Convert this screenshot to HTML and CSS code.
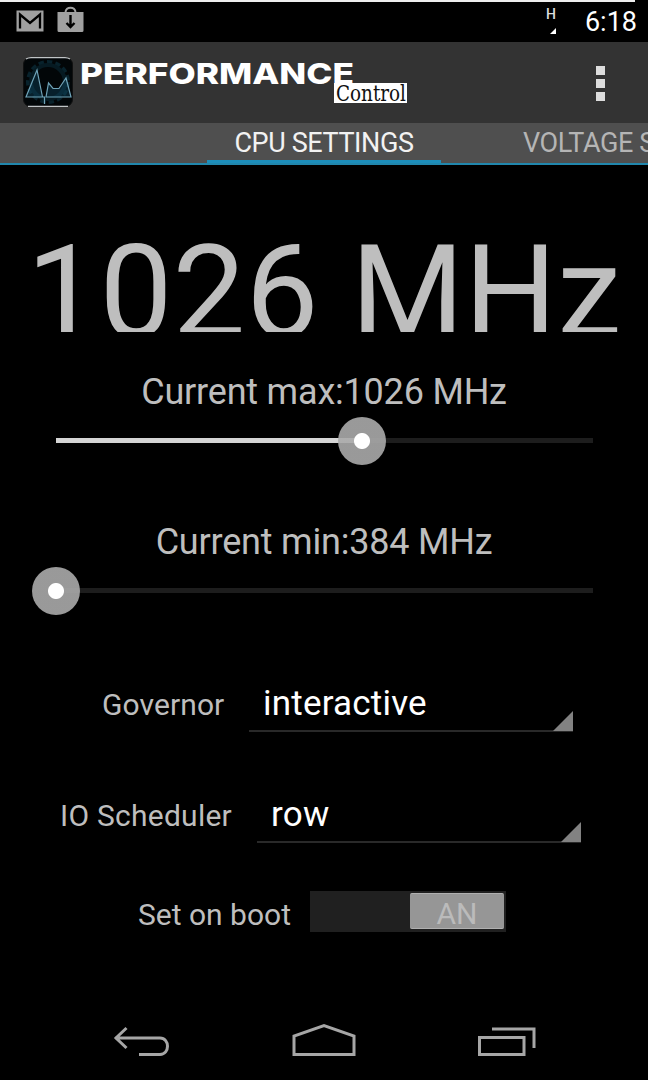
FILE: index.html
```html
<!DOCTYPE html>
<html lang="en">
<head>
    <meta charset="UTF-8">
    <meta name="viewport" content="width=device-width, initial-scale=1.0">
    <title>Performance Control</title>
    <link rel="stylesheet" href="styles.css">
</head>
<body>

<!-- Status bar -->
<div class="statusbar">
    <svg class="mail-icon" width="28" height="22" viewBox="0 0 28 22">
        <rect x="0.5" y="0.5" width="27" height="21" fill="#a0a0a0"/>
        <path d="M4 18.500V4.500l10 8.500 10-8.500v14" fill="none" stroke="#000" stroke-width="2.300"/>
    </svg>
    <svg class="store-icon" width="27" height="27" viewBox="0 0 27 27">
        <path d="M8.500 6.500C8.500 0 18.500 0 18.500 6.500" fill="none" stroke="#a0a0a0" stroke-width="2"/>
        <path d="M0.500 6h26v18.500a1.500 1.500 0 0 1-1.500 1.500h-23a1.500 1.500 0 0 1-1.500-1.500z" fill="#a0a0a0"/>
        <path d="M13.500 9v11M9.500 17l4 4 4-4" fill="none" stroke="#000" stroke-width="2.400"/>
    </svg>
    <div class="signal">
        <span>H</span>
        <svg width="6" height="6" viewBox="0 0 6 6"><path d="M6 0v6H0z" fill="#fff"/></svg>
    </div>
    <span class="clock">6:18</span>
</div>

<!-- Action bar -->
<div class="actionbar">
    <svg class="app-icon" width="50" height="50" viewBox="0 0 50 50">
        <rect x="0.500" y="0.500" width="49" height="49" rx="7" fill="#020608" stroke="#111"/>
        <circle cx="25" cy="25" r="19" fill="none" stroke="#08222c" stroke-width="6" stroke-dasharray="5 3"/>
        <circle cx="25" cy="25" r="17" fill="none" stroke="#061a22" stroke-width="4"/>
        <path d="M3 40L14 13l5 27zM23 40l2.500-14 4 6h7l7-11 4.500 19z" fill="#10536f" fill-opacity="0.350"/>
        <path d="M21.500 47v-7H3L14 13l5.500 27M22.500 40H48l-5-19-7 10.500h-6L25.500 26 23 40" fill="none" stroke="#6fa3b8" stroke-width="1.200"/>
        <path d="M3 2Q5 0.600 8 0.600h34q3 0 5 1.400M5 49.300h40" fill="none" stroke="#c0c4c6" stroke-width="1.200"/>
    </svg>
    <svg class="logo" width="330" height="48" viewBox="0 0 330 48">
        <text class="logo-name" x="0" y="24.500" textLength="274" lengthAdjust="spacingAndGlyphs">PERFORMANCE</text>
        <rect x="254" y="24" width="73" height="20" fill="#fff"/>
        <text class="logo-sub" x="256" y="41.500" textLength="70" lengthAdjust="spacingAndGlyphs">Control</text>
    </svg>
    <div class="overflow-menu"><i></i><i></i><i></i></div>
</div>

<!-- Tabs -->
<div class="tabs">
    <div class="tab active">CPU SETTINGS</div>
    <div class="tab next">VOLTAGE SETTINGS</div>
</div>

<div class="content">
    <div class="current-speed">1026 MHz</div>

    <div class="label label-max">Current max:1026 MHz</div>
    <div class="slider">
        <div class="slider-fill" style="width: 57%"></div>
        <div class="thumb" style="left: 57%"></div>
    </div>

    <div class="label label-min">Current min:384 MHz</div>
    <div class="slider">
        <div class="thumb" style="left: 0%"></div>
    </div>

    <div class="row governor">
        <label>Governor</label>
        <div class="spinner">interactive</div>
    </div>
    <div class="row scheduler">
        <label>IO Scheduler</label>
        <div class="spinner">row</div>
    </div>
    <div class="row boot">
        <label>Set on boot</label>
        <div class="switch"><div class="switch-thumb">AN</div></div>
    </div>
</div>

<!-- Navigation bar -->
<div class="navbar">
    <svg width="58" height="34" viewBox="0 0 58 34">
        <path d="M2 16h45c10 0 10 16.500 0 16.500H26M13.500 6L3 16l10.500 10" fill="none" stroke="#a6a6a6" stroke-width="3"/>
    </svg>
    <svg class="home" width="64" height="34" viewBox="0 0 64 34">
        <path d="M2 32.500V14L32 3.500 62 14v18.500z" fill="none" stroke="#a6a6a6" stroke-width="3"/>
    </svg>
    <svg width="58" height="34" viewBox="0 0 58 34">
        <path d="M1.500 15.500h44.500v17H1.500zM14 7h42v19" fill="none" stroke="#a6a6a6" stroke-width="3"/>
    </svg>
</div>

</body>
</html>
```
FILE: styles.css
```css
* {
    box-sizing: border-box;
}

body {
    margin: 0;
    width: 648px;
    height: 1080px;
    display: flex;
    flex-direction: column;
    overflow: hidden;
    background-color: #000;
    color: #bebebe;
    font-family: Roboto, sans-serif;
    white-space: nowrap;
}

/* status bar */
.statusbar {
    height: 42px;
    display: flex;
    align-items: flex-start;
    padding: 0 11px 0 16px;
    background: linear-gradient(#eee, #eee) no-repeat 0 0 / 635px 2px;
}

.mail-icon {
    margin-top: 10px;
}

.store-icon {
    margin: 6px 0 0 13px;
}

.signal {
    display: flex;
    flex-direction: column;
    align-items: flex-end;
    margin: 7px 29px 0 auto;
    color: #ddd;
    font-size: 14px;
    font-weight: 500;
    line-height: 14px;
}

.signal svg {
    margin-top: 7px;
}

.clock {
    color: #fff;
    font-size: 27px;
    line-height: 44px;
}

/* action bar */
.actionbar {
    height: 81px;
    display: flex;
    align-items: flex-start;
    padding: 0 43px 0 23px;
    background-color: #333;
}

.app-icon {
    margin-top: 15px;
}

.logo {
    margin: 17px 0 0 7px;
    overflow: visible;
}

.logo-name {
    font-family: Inter, sans-serif;
    font-size: 29px;
    font-weight: 800;
    fill: #fff;
}

.logo-sub {
    font-family: "DejaVu Serif", serif;
    font-size: 22px;
    fill: #111;
}

.overflow-menu {
    display: flex;
    flex-direction: column;
    gap: 4px;
    margin: 24px 0 0 auto;
}

.overflow-menu i {
    width: 9px;
    height: 9px;
    background-color: #ddd;
}

/* tabs */
.tabs {
    height: 42px;
    display: flex;
    overflow: hidden;
    padding-left: 207px;
    background-color: #4f4f4f;
    border-bottom: 2px solid #2187ad;
    font-size: 27px;
    line-height: 40px;
    letter-spacing: -0.4px;
}

.tab {
    flex-shrink: 0;
}

.tab.active {
    width: 234px;
    height: 40px;
    color: #f2f2f2;
    text-align: center;
    border-bottom: 3px solid #1c8ebb;
}

.tab.next {
    margin-left: 82px;
    color: #b5b5b5;
}

/* cpu page */
.content {
    height: 837px;
    padding: 0 56px;
}

/* the line box is taller than the view, so the digits are cut at the baseline */
.current-speed {
    height: 105px;
    margin: 62px -58px 0;
    overflow: hidden;
    text-align: center;
    font-size: 130px;
    line-height: 132px;
}

.label {
    height: 44px;
    text-align: center;
    font-size: 36px;
    line-height: 44px;
    letter-spacing: -0.2px;
}

.label-max {
    margin-top: 38px;
}

.label-min {
    margin-top: 77px;
}

.slider {
    position: relative;
    width: 537px;
    height: 5px;
    margin-top: 24px;
    background-color: #1d1d1d;
}

.slider-fill {
    height: 5px;
    background-color: #d5d5d5;
}

.thumb {
    position: absolute;
    top: 3px;
    width: 48px;
    height: 48px;
    border-radius: 50%;
    transform: translate(-50%, -50%);
    background: radial-gradient(circle, #fff 7.500px, rgba(170, 170, 170, 0.900) 8.500px);
}

.row {
    display: flex;
    align-items: flex-start;
    font-size: 30px;
}

.row label {
    line-height: 35px;
}

.governor {
    margin: 94px 0 0 46px;
}

.scheduler {
    margin: 66px 0 0 4px;
}

.boot {
    margin: 48px 0 0 82px;
}

.governor label {
    width: 147px;
    letter-spacing: 0.1px;
}

.scheduler label {
    width: 197px;
    letter-spacing: 0.25px;
}

.boot label {
    width: 172px;
    padding-top: 6px;
}

.spinner {
    width: 324px;
    height: 45px;
    padding-left: 14px;
    color: #fff;
    font-size: 35px;
    line-height: 33px;
    letter-spacing: 0.2px;
    border-bottom: 2px solid #292929;
    position: relative;
}

/* corner triangle */
.spinner::after {
    content: "";
    position: absolute;
    right: 0;
    bottom: -1px;
    width: 20px;
    height: 20px;
    background-color: #828282;
    clip-path: polygon(100% 0, 100% 100%, 0 100%);
}

.switch {
    width: 196px;
    height: 41px;
    padding: 2px 2px 2px 100px;
    background-color: #202020;
}

.switch-thumb {
    height: 36px;
    color: #bbb;
    text-align: center;
    line-height: 39px;
    background-color: #969696;
    border-top: 1px solid #b0b0b0;
    border-bottom: 1px solid #b0b0b0;
    border-radius: 2px;
}

/* navigation */
.navbar {
    display: flex;
    justify-content: space-between;
    padding: 20px 112px 0 113px;
}

.home {
    margin-right: 2px;
}
```
